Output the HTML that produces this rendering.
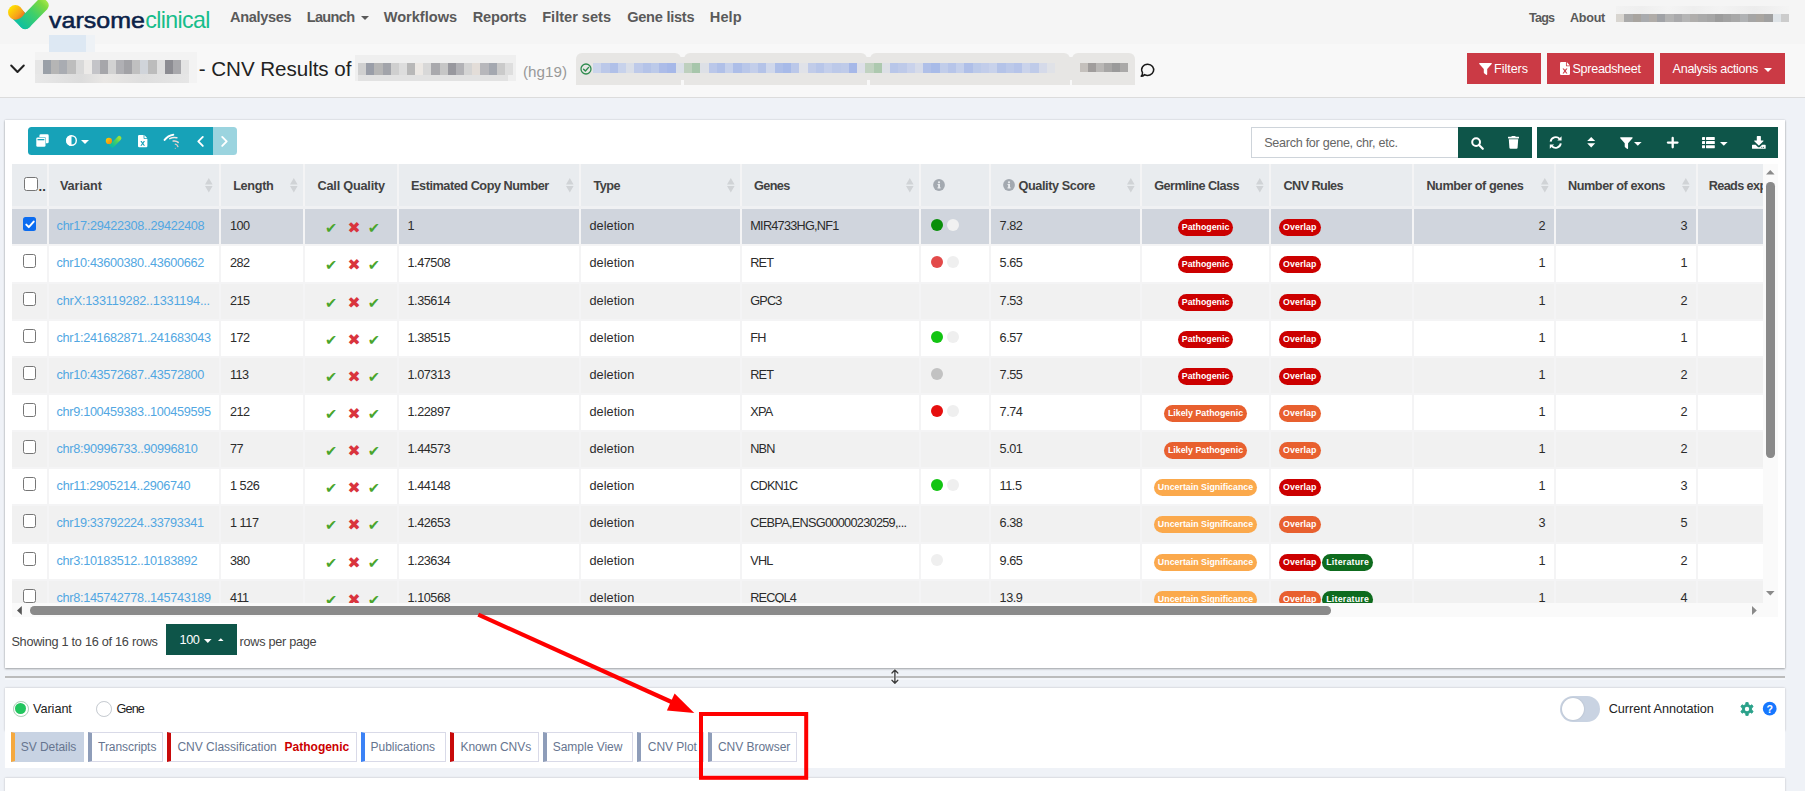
<!DOCTYPE html>
<html lang="en"><head><meta charset="utf-8"><title>VarSome Clinical - CNV Results</title>
<style>
html,body{margin:0;padding:0}
body{width:1805px;height:791px;overflow:hidden;position:relative;background:#eff2f7;font-family:"Liberation Sans",sans-serif;font-size:12.5px;color:#333}
.a{position:absolute}
.t{position:absolute;white-space:nowrap;line-height:20px;height:20px}
svg{position:absolute;overflow:visible}
.cell{position:absolute;overflow:hidden}
.badge{position:absolute;height:16.6px;border-radius:9px;color:#fff;font-weight:700;font-size:8.8px;line-height:17.4px;text-align:center;white-space:nowrap}
.cb{position:absolute;width:11.5px;height:11.5px;border:1.2px solid #767676;border-radius:2.5px;background:#fff}
.dot{position:absolute;width:12px;height:12px;border-radius:50%}
.ck{position:absolute;font-family:"DejaVu Sans",sans-serif;font-size:14.6px;line-height:16px;height:16px}
.tab{position:absolute;top:732.2px;height:27.4px;border:1px solid #d9dae8;border-left:4px solid #8e9db9;background:#fff;box-sizing:content-box}
.tab span{position:absolute;top:0;line-height:28.4px;font-size:12px;color:#66758f;white-space:nowrap}
</style></head><body>

<div class="a" style="left:0;top:0;width:1805px;height:44px;background:#f5f5f5"></div>
<div class="a" style="left:0;top:44px;width:1805px;height:53px;background:#f8f8f8"></div>
<div class="a" style="left:0;top:96.5px;width:1805px;height:1.5px;background:#dcdcdc"></div>
<svg style="left:0;top:0" width="60" height="34" viewBox="0 0 60 34">
<defs>
<linearGradient id="lg1" gradientUnits="userSpaceOnUse" x1="16" y1="30" x2="48" y2="0"><stop offset="0" stop-color="#12c2a0"/><stop offset="0.55" stop-color="#3fcf6a"/><stop offset="1" stop-color="#8fdc3a"/></linearGradient>
<linearGradient id="lg1b" x1="0.5" y1="1" x2="0.5" y2="0"><stop offset="0" stop-color="#0fc0a0"/><stop offset="0.5" stop-color="#3fcf6a"/><stop offset="0.85" stop-color="#7dd940"/><stop offset="1" stop-color="#a5e84a"/></linearGradient>
<linearGradient id="lg2" gradientUnits="userSpaceOnUse" x1="11" y1="7" x2="23" y2="19"><stop offset="0" stop-color="#ffe000"/><stop offset="0.6" stop-color="#f7a21b"/><stop offset="1" stop-color="#e8641f"/></linearGradient>
</defs>
<path d="M15.4 12.4 L25.3 22.3" stroke="#12c2a0" stroke-width="13" stroke-linecap="round" fill="none"/>
<rect x="-6.5" y="-30.2" width="13" height="36.7" rx="5.5" fill="url(#lg1b)" transform="translate(25.3 22.3) rotate(44.4)"/>
<path d="M25 13.1 L20.36 7.04 A7.3 7.3 0 0 0 10.04 17.36 L12.2 18.9 Q19.8 21.8 25 13.1Z" fill="url(#lg2)"/>
</svg>
<div class="t" style="left:48.8px;top:9.8px;font-size:22.7px;color:#0b2248;letter-spacing:0.03px;-webkit-text-stroke:0.55px #0b2248;transform:scaleX(1.1);transform-origin:0 50%;">varsome</div>
<div class="t" style="left:145.2px;top:9.8px;font-size:23.2px;color:#17bd8b;letter-spacing:-0.64px;">clinical</div>
<div class="a" style="left:49px;top:35px;width:37px;height:17px;background:#dde8f3"></div>
<div class="a" style="left:86px;top:35px;width:9px;height:17px;background:#eef2f6"></div>
<div class="t" style="left:230.1px;top:7.0px;font-size:14.6px;color:#5a5a5a;font-weight:700;letter-spacing:-0.38px;">Analyses</div>
<div class="t" style="left:306.7px;top:7.0px;font-size:14.6px;color:#5a5a5a;font-weight:700;letter-spacing:-0.68px;">Launch</div>
<div class="t" style="left:383.7px;top:7.0px;font-size:14.6px;color:#5a5a5a;font-weight:700;letter-spacing:-0.01px;">Workflows</div>
<div class="t" style="left:472.7px;top:7.0px;font-size:14.6px;color:#5a5a5a;font-weight:700;letter-spacing:-0.21px;">Reports</div>
<div class="t" style="left:542.2px;top:7.0px;font-size:14.6px;color:#5a5a5a;font-weight:700;letter-spacing:-0.01px;">Filter sets</div>
<div class="t" style="left:627.2px;top:7.0px;font-size:14.6px;color:#5a5a5a;font-weight:700;letter-spacing:-0.27px;">Gene lists</div>
<div class="t" style="left:709.8px;top:7.0px;font-size:14.6px;color:#5a5a5a;font-weight:700;letter-spacing:0.07px;">Help</div>
<svg style="left:361px;top:15.5px" width="8" height="4" viewBox="0 0 8 4"><path d="M0 0H8L4 4Z" fill="#5a5a5a"/></svg>
<div class="t" style="left:1529.0px;top:7.5px;font-size:12.6px;color:#5a5a5a;font-weight:700;letter-spacing:-0.79px;">Tags</div>
<div class="t" style="left:1570.0px;top:7.5px;font-size:12.6px;color:#5a5a5a;font-weight:700;letter-spacing:-0.28px;">About</div>
<div class="a" style="left:1616.0px;top:14px;width:8.5px;height:8px;background:#d8d5d0"></div><div class="a" style="left:1624.2px;top:14px;width:8.5px;height:8px;background:#aaaaaa"></div><div class="a" style="left:1632.5px;top:14px;width:8.5px;height:8px;background:#a8a49f"></div><div class="a" style="left:1640.7px;top:14px;width:8.5px;height:8px;background:#a9abae"></div><div class="a" style="left:1649.0px;top:14px;width:8.5px;height:8px;background:#b0aca8"></div><div class="a" style="left:1657.2px;top:14px;width:8.5px;height:8px;background:#a0a2a6"></div><div class="a" style="left:1665.4px;top:14px;width:8.5px;height:8px;background:#b3b3b3"></div><div class="a" style="left:1673.7px;top:14px;width:8.5px;height:8px;background:#a9a9ab"></div><div class="a" style="left:1681.9px;top:14px;width:8.5px;height:8px;background:#b5b5b5"></div><div class="a" style="left:1690.1px;top:14px;width:8.5px;height:8px;background:#b0aeac"></div><div class="a" style="left:1698.4px;top:14px;width:8.5px;height:8px;background:#aaaaaa"></div><div class="a" style="left:1706.6px;top:14px;width:8.5px;height:8px;background:#a6a6a6"></div><div class="a" style="left:1714.9px;top:14px;width:8.5px;height:8px;background:#9c9c9c"></div><div class="a" style="left:1723.1px;top:14px;width:8.5px;height:8px;background:#a2a2a2"></div><div class="a" style="left:1731.3px;top:14px;width:8.5px;height:8px;background:#a8a8a8"></div><div class="a" style="left:1739.6px;top:14px;width:8.5px;height:8px;background:#b0b2b4"></div><div class="a" style="left:1747.8px;top:14px;width:8.5px;height:8px;background:#a5a5a5"></div><div class="a" style="left:1756.0px;top:14px;width:8.5px;height:8px;background:#a9a5a0"></div><div class="a" style="left:1764.3px;top:14px;width:8.5px;height:8px;background:#a0a0a0"></div><div class="a" style="left:1772.5px;top:14px;width:8.5px;height:8px;background:#dfe4e8"></div><div class="a" style="left:1780.8px;top:14px;width:8.5px;height:8px;background:#cccccc"></div>
<div class="a" style="left:1616px;top:6px;width:173px;height:8px;background:linear-gradient(90deg,#f2f2f2 0,#eee 15%,#f4f4f4 30%,#eee 45%,#f3f3f3 60%,#ececec 80%,#f4f4f4 100%)"></div>
<svg style="left:9.5px;top:64px" width="15" height="10" viewBox="0 0 15 10"><path d="M1.2 1.5L7.5 8L13.8 1.5" stroke="#222" stroke-width="2" fill="none" stroke-linecap="round" stroke-linejoin="round"/></svg>
<div class="a" style="left:35px;top:52px;width:162px;height:31px;background:#f3f3f3"></div>
<div class="a" style="left:35.0px;top:60px;width:8.4px;height:14px;background:#e6e6e6"></div><div class="a" style="left:43.1px;top:60px;width:8.4px;height:14px;background:#9aa0a8"></div><div class="a" style="left:51.2px;top:60px;width:8.4px;height:14px;background:#b5b5b5"></div><div class="a" style="left:59.3px;top:60px;width:8.4px;height:14px;background:#a9acb2"></div><div class="a" style="left:67.4px;top:60px;width:8.4px;height:14px;background:#bdbdbd"></div><div class="a" style="left:75.5px;top:60px;width:8.4px;height:14px;background:#d9d9d9"></div><div class="a" style="left:83.6px;top:60px;width:8.4px;height:14px;background:#eceae8"></div><div class="a" style="left:91.7px;top:60px;width:8.4px;height:14px;background:#c4c4c8"></div><div class="a" style="left:99.8px;top:60px;width:8.4px;height:14px;background:#a6a6aa"></div><div class="a" style="left:107.9px;top:60px;width:8.4px;height:14px;background:#d2d2d2"></div><div class="a" style="left:116.0px;top:60px;width:8.4px;height:14px;background:#b0b0b4"></div><div class="a" style="left:124.1px;top:60px;width:8.4px;height:14px;background:#a2a2a6"></div><div class="a" style="left:132.2px;top:60px;width:8.4px;height:14px;background:#c0c0c0"></div><div class="a" style="left:140.3px;top:60px;width:8.4px;height:14px;background:#d0d4da"></div><div class="a" style="left:148.4px;top:60px;width:8.4px;height:14px;background:#bcbcbc"></div><div class="a" style="left:156.5px;top:60px;width:8.4px;height:14px;background:#dedede"></div><div class="a" style="left:164.6px;top:60px;width:8.4px;height:14px;background:#8c8c92"></div><div class="a" style="left:172.7px;top:60px;width:8.4px;height:14px;background:#a8a8ac"></div><div class="a" style="left:180.8px;top:60px;width:8.4px;height:14px;background:#e4e4e4"></div><div class="a" style="left:188.9px;top:60px;width:8.4px;height:14px;background:#f3f3f3"></div>
<div class="a" style="left:35px;top:74px;width:154px;height:9px;background:linear-gradient(90deg,#e8e8e8,#dcdcdc 30%,#e9e7e5 45%,#dedede 70%,#e6e6e6)"></div>
<div class="t" style="left:198.8px;top:58.7px;font-size:20.6px;color:#222;letter-spacing:-0.05px;">- CNV Results of</div>
<div class="a" style="left:355px;top:55px;width:161px;height:26px;background:#efefef"></div>
<div class="a" style="left:358.0px;top:63px;width:8.5px;height:12px;background:#d0d0d0"></div><div class="a" style="left:366.2px;top:63px;width:8.5px;height:12px;background:#9a9ea8"></div><div class="a" style="left:374.3px;top:63px;width:8.5px;height:12px;background:#b6b6b6"></div><div class="a" style="left:382.5px;top:63px;width:8.5px;height:12px;background:#a2a4aa"></div><div class="a" style="left:390.6px;top:63px;width:8.5px;height:12px;background:#cfcfcf"></div><div class="a" style="left:398.8px;top:63px;width:8.5px;height:12px;background:#ddd"></div><div class="a" style="left:406.9px;top:63px;width:8.5px;height:12px;background:#b8b8b8"></div><div class="a" style="left:415.1px;top:63px;width:8.5px;height:12px;background:#ece8e4"></div><div class="a" style="left:423.3px;top:63px;width:8.5px;height:12px;background:#d8d8d8"></div><div class="a" style="left:431.4px;top:63px;width:8.5px;height:12px;background:#a9a9ad"></div><div class="a" style="left:439.6px;top:63px;width:8.5px;height:12px;background:#c6c6c6"></div><div class="a" style="left:447.7px;top:63px;width:8.5px;height:12px;background:#98989e"></div><div class="a" style="left:455.9px;top:63px;width:8.5px;height:12px;background:#b2b2b6"></div><div class="a" style="left:464.1px;top:63px;width:8.5px;height:12px;background:#d4d4d4"></div><div class="a" style="left:472.2px;top:63px;width:8.5px;height:12px;background:#e3ddd8"></div><div class="a" style="left:480.4px;top:63px;width:8.5px;height:12px;background:#b7b7bb"></div><div class="a" style="left:488.5px;top:63px;width:8.5px;height:12px;background:#a4a8b0"></div><div class="a" style="left:496.7px;top:63px;width:8.5px;height:12px;background:#cacaca"></div><div class="a" style="left:504.8px;top:63px;width:8.5px;height:12px;background:#dedede"></div>
<div class="a" style="left:358px;top:75px;width:150px;height:6px;background:#e2e2e2"></div>
<div class="t" style="left:523.0px;top:61.5px;font-size:15.2px;color:#999;letter-spacing:0.01px;">(hg19)</div>
<div class="a" style="left:576px;top:53.1px;width:105.0px;height:31.8px;background:#e7e6e4;border-radius:6px 6px 0 0"></div>
<div class="a" style="left:683.7px;top:53.1px;width:183.8px;height:31.8px;background:#e7e6e4;border-radius:6px 6px 0 0"></div>
<div class="a" style="left:870px;top:53.1px;width:199.6px;height:31.8px;background:#e7e6e4;border-radius:6px 6px 0 0"></div>
<div class="a" style="left:1072px;top:53.1px;width:63.0px;height:31.8px;background:#e7e6e4;border-radius:6px 6px 0 0"></div>
<div class="a" style="left:593px;top:57px;width:535px;height:23px;background:#e7e6e4"></div>
<svg style="left:580px;top:63px" width="12" height="12" viewBox="0 0 12 12"><circle cx="6" cy="6" r="5" fill="none" stroke="#2e8b4e" stroke-width="1.3"/><path d="M3.6 6.2L5.4 8L8.6 4.4" fill="none" stroke="#2e8b4e" stroke-width="1.4" stroke-linecap="round" stroke-linejoin="round"/></svg>
<div class="a" style="left:593.0px;top:62.5px;width:8.6px;height:10px;background:#ccd5eb"></div><div class="a" style="left:601.2px;top:62.5px;width:8.6px;height:10px;background:#bbc8e9"></div><div class="a" style="left:609.5px;top:62.5px;width:8.6px;height:10px;background:#b0c0e8"></div><div class="a" style="left:617.8px;top:62.5px;width:8.6px;height:10px;background:#c7d2eb"></div><div class="a" style="left:626.0px;top:62.5px;width:8.6px;height:10px;background:#d9dee8"></div><div class="a" style="left:634.2px;top:62.5px;width:8.6px;height:10px;background:#becae9"></div><div class="a" style="left:642.5px;top:62.5px;width:8.6px;height:10px;background:#b4c3e8"></div><div class="a" style="left:650.8px;top:62.5px;width:8.6px;height:10px;background:#bccae9"></div><div class="a" style="left:659.0px;top:62.5px;width:8.6px;height:10px;background:#acbce8"></div><div class="a" style="left:667.2px;top:62.5px;width:8.6px;height:10px;background:#a6b8e8"></div><div class="a" style="left:675.5px;top:62.5px;width:8.6px;height:10px;background:#dbe0e8"></div><div class="a" style="left:683.8px;top:62.5px;width:8.6px;height:10px;background:#bed0be"></div><div class="a" style="left:692.0px;top:62.5px;width:8.6px;height:10px;background:#a7c6ab"></div><div class="a" style="left:700.2px;top:62.5px;width:8.6px;height:10px;background:#dde0e6"></div><div class="a" style="left:708.5px;top:62.5px;width:8.6px;height:10px;background:#bac7e9"></div><div class="a" style="left:716.8px;top:62.5px;width:8.6px;height:10px;background:#b0c0e8"></div><div class="a" style="left:725.0px;top:62.5px;width:8.6px;height:10px;background:#c6d1eb"></div><div class="a" style="left:733.2px;top:62.5px;width:8.6px;height:10px;background:#adbee8"></div><div class="a" style="left:741.5px;top:62.5px;width:8.6px;height:10px;background:#b9c7e9"></div><div class="a" style="left:749.8px;top:62.5px;width:8.6px;height:10px;background:#c3ceea"></div><div class="a" style="left:758.0px;top:62.5px;width:8.6px;height:10px;background:#b4c3e8"></div><div class="a" style="left:766.2px;top:62.5px;width:8.6px;height:10px;background:#d0d8eb"></div><div class="a" style="left:774.5px;top:62.5px;width:8.6px;height:10px;background:#aebfe8"></div><div class="a" style="left:782.8px;top:62.5px;width:8.6px;height:10px;background:#a7bae8"></div><div class="a" style="left:791.0px;top:62.5px;width:8.6px;height:10px;background:#bbc8e9"></div><div class="a" style="left:799.2px;top:62.5px;width:8.6px;height:10px;background:#e0e2e8"></div><div class="a" style="left:807.5px;top:62.5px;width:8.6px;height:10px;background:#c1cce9"></div><div class="a" style="left:815.8px;top:62.5px;width:8.6px;height:10px;background:#b8c6e9"></div><div class="a" style="left:824.0px;top:62.5px;width:8.6px;height:10px;background:#c4cfeb"></div><div class="a" style="left:832.2px;top:62.5px;width:8.6px;height:10px;background:#bcc9e9"></div><div class="a" style="left:840.5px;top:62.5px;width:8.6px;height:10px;background:#bfcbe9"></div><div class="a" style="left:848.8px;top:62.5px;width:8.6px;height:10px;background:#a6b8e8"></div><div class="a" style="left:857.0px;top:62.5px;width:8.6px;height:10px;background:#dee0e8"></div><div class="a" style="left:865.2px;top:62.5px;width:8.6px;height:10px;background:#c1d2c1"></div><div class="a" style="left:873.5px;top:62.5px;width:8.6px;height:10px;background:#adc9af"></div><div class="a" style="left:881.8px;top:62.5px;width:8.6px;height:10px;background:#dde0e6"></div><div class="a" style="left:890.0px;top:62.5px;width:8.6px;height:10px;background:#b8c6e9"></div><div class="a" style="left:898.2px;top:62.5px;width:8.6px;height:10px;background:#becae9"></div><div class="a" style="left:906.5px;top:62.5px;width:8.6px;height:10px;background:#c9d2eb"></div><div class="a" style="left:914.8px;top:62.5px;width:8.6px;height:10px;background:#d6dbe9"></div><div class="a" style="left:923.0px;top:62.5px;width:8.6px;height:10px;background:#b0c0e8"></div><div class="a" style="left:931.2px;top:62.5px;width:8.6px;height:10px;background:#a8bbe8"></div><div class="a" style="left:939.5px;top:62.5px;width:8.6px;height:10px;background:#c1cdea"></div><div class="a" style="left:947.8px;top:62.5px;width:8.6px;height:10px;background:#b7c5e9"></div><div class="a" style="left:956.0px;top:62.5px;width:8.6px;height:10px;background:#c5d0eb"></div><div class="a" style="left:964.2px;top:62.5px;width:8.6px;height:10px;background:#afbfe8"></div><div class="a" style="left:972.5px;top:62.5px;width:8.6px;height:10px;background:#bccae9"></div><div class="a" style="left:980.8px;top:62.5px;width:8.6px;height:10px;background:#c2cdea"></div><div class="a" style="left:989.0px;top:62.5px;width:8.6px;height:10px;background:#c8d2eb"></div><div class="a" style="left:997.2px;top:62.5px;width:8.6px;height:10px;background:#b4c3e8"></div><div class="a" style="left:1005.5px;top:62.5px;width:8.6px;height:10px;background:#bcc9e9"></div><div class="a" style="left:1013.8px;top:62.5px;width:8.6px;height:10px;background:#b6c4e9"></div><div class="a" style="left:1022.0px;top:62.5px;width:8.6px;height:10px;background:#cad3eb"></div><div class="a" style="left:1030.2px;top:62.5px;width:8.6px;height:10px;background:#bfcbe9"></div><div class="a" style="left:1038.5px;top:62.5px;width:8.6px;height:10px;background:#d5dae9"></div><div class="a" style="left:1046.8px;top:62.5px;width:8.6px;height:10px;background:#e0e2e7"></div>
<div class="a" style="left:1080.0px;top:62.5px;width:8.3px;height:9px;background:#c4c0bc"></div><div class="a" style="left:1088.0px;top:62.5px;width:8.3px;height:9px;background:#a09d9c"></div><div class="a" style="left:1096.0px;top:62.5px;width:8.3px;height:9px;background:#b9b7b5"></div><div class="a" style="left:1104.0px;top:62.5px;width:8.3px;height:9px;background:#a7a6a5"></div><div class="a" style="left:1112.0px;top:62.5px;width:8.3px;height:9px;background:#9a9a9a"></div><div class="a" style="left:1120.0px;top:62.5px;width:8.3px;height:9px;background:#aaa9a8"></div>
<svg style="left:1140px;top:62.5px" width="15" height="15" viewBox="0 0 15 15"><path d="M7.8 1.2A6 5.6 0 1 1 4.6 11.6Q3 13.2 1.2 13.3Q2.6 11.6 2.5 9.6A6 5.6 0 0 1 7.8 1.2Z" fill="none" stroke="#1a1a1a" stroke-width="1.5" stroke-linejoin="round"/></svg>
<div class="a" style="left:1467px;top:53px;width:74px;height:30.7px;background:#cb3a45"></div>
<div class="a" style="left:1547px;top:53px;width:107px;height:30.7px;background:#cb3a45"></div>
<div class="a" style="left:1660px;top:53px;width:125px;height:30.7px;background:#cb3a45"></div>
<svg style="left:1479.4px;top:62.5px" width="13" height="12" viewBox="0 0 13 12"><path d="M0.6 0H12.4Q13.3 0.3 12.7 1.1L8.2 6V11.3Q8 12.3 7.1 11.7L5.1 10.2Q4.8 9.9 4.8 9.5V6L0.3 1.1Q-0.3 0.3 0.6 0Z" fill="#fff"/></svg>
<div class="t" style="left:1494.0px;top:58.5px;font-size:12.6px;color:#fff;letter-spacing:-0.04px;">Filters</div>
<svg style="left:1560px;top:62.3px" width="10" height="13" viewBox="0 0 9.4 12.2"><path d="M0 1.2Q0 0 1.2 0H5.6V3.2Q5.6 4 6.4 4H9.4V11Q9.4 12.2 8.2 12.2H1.2Q0 12.2 0 11ZM6.4 0.1L9.3 3.2H6.4ZM2.4 6L3.7 6L4.7 7.6L5.7 6H7L5.4 8.4L7 10.8H5.7L4.7 9.2L3.7 10.8H2.4L4 8.4Z" fill="#fff" fill-rule="evenodd"/></svg>
<div class="t" style="left:1572.5px;top:58.5px;font-size:12.6px;color:#fff;letter-spacing:-0.30px;">Spreadsheet</div>
<div class="t" style="left:1672.6px;top:58.5px;font-size:12.6px;color:#fff;letter-spacing:-0.31px;">Analysis actions</div>
<svg style="left:1764px;top:68px" width="8" height="4" viewBox="0 0 8 4"><path d="M0 0H8L4 4Z" fill="#fff"/></svg>
<div class="a" style="left:5px;top:119.5px;width:1780px;height:548.5px;background:#fff;box-shadow:0 1px 2px rgba(0,0,0,.30),0 0 2px rgba(0,0,0,.14)"></div>
<div class="a" style="left:28px;top:127px;width:185px;height:27.6px;background:#17a2b8;border-radius:3.5px 0 0 3.5px"></div>
<div class="a" style="left:213px;top:127px;width:24px;height:27.6px;background:#9bd4df;border-radius:0 3.5px 3.5px 0"></div>
<svg style="left:36px;top:134px" width="13" height="13" viewBox="0 0 13 13">
<rect x="3.4" y="0.3" width="9.3" height="9" rx="1.4" fill="#fff"/>
<rect x="-0.3" y="2.9" width="10.2" height="10.2" rx="1.6" fill="#17a2b8"/>
<rect x="0.3" y="3.5" width="9.2" height="9.2" rx="1.3" fill="#fff"/>
<rect x="1.5" y="5" width="6.8" height="1.3" fill="#17a2b8"/>
</svg>
<svg style="left:65.5px;top:135.4px" width="11" height="11" viewBox="0 0 11 11"><circle cx="5.5" cy="5.5" r="4.8" fill="none" stroke="#fff" stroke-width="1.4"/><path d="M5.5 0.2A5.3 5.3 0 0 0 5.5 10.8Z" fill="#fff"/></svg>
<svg style="left:81.3px;top:140.4px" width="8" height="4" viewBox="0 0 8 4"><path d="M0 0H8L4 4Z" fill="#fff"/></svg>
<svg style="left:105px;top:135px" width="17" height="13" viewBox="0 0 17 13">
<defs><linearGradient id="lg3" x1="0" y1="1" x2="1" y2="0"><stop offset="0" stop-color="#10bf9a"/><stop offset="0.6" stop-color="#4fd25a"/><stop offset="1" stop-color="#9be03a"/></linearGradient>
<linearGradient id="lg4" x1="0" y1="0" x2="1" y2="1"><stop offset="0" stop-color="#ffd400"/><stop offset="1" stop-color="#f07d1c"/></linearGradient></defs>
<path d="M4.6 7.2L7.5 10.1" stroke="#12c19c" stroke-width="4.4" stroke-linecap="round"/>
<path d="M7.5 10.1L14.2 3.2" stroke="url(#lg3)" stroke-width="4.4" stroke-linecap="round"/>
<circle cx="3.9" cy="5.9" r="3.1" fill="url(#lg4)"/>
</svg>
<svg style="left:138px;top:134.7px" width="9.4" height="12.2" viewBox="0 0 9.4 12.2"><path d="M0 1.2Q0 0 1.2 0H5.6V3.2Q5.6 4 6.4 4H9.4V11Q9.4 12.2 8.2 12.2H1.2Q0 12.2 0 11ZM6.4 0.1L9.3 3.2H6.4ZM2.4 6L3.7 6L4.7 7.6L5.7 6H7L5.4 8.4L7 10.8H5.7L4.7 9.2L3.7 10.8H2.4L4 8.4Z" fill="#fff" fill-rule="evenodd"/></svg>
<svg style="left:164px;top:134px" width="16" height="15" viewBox="0 0 16 15" fill="none" stroke-linecap="round">
<path d="M0.6 5.9Q4 1.4 9.3 0.7" stroke="#fff" stroke-width="2"/>
<path d="M5.8 4.6Q9.4 2.8 12.8 3.8" stroke="#f5e9e7" stroke-width="1.6"/>
<path d="M9.2 7.1Q12 6.4 14.2 8.4" stroke="#eedad7" stroke-width="1.5"/>
<path d="M11.3 10.1Q13.3 10.4 13.9 12.6" stroke="#e4c9c5" stroke-width="1.4"/>
<circle cx="11.3" cy="14.3" r="0.6" fill="#d9b3ae" stroke="none"/>
</svg>
<svg style="left:196.5px;top:135.6px" width="7" height="11" viewBox="0 0 7 11"><path d="M5.8 0.9L1.3 5.4L5.8 9.9" stroke="#fff" stroke-width="1.9" fill="none" stroke-linecap="round" stroke-linejoin="round"/></svg>
<svg style="left:221px;top:135.6px" width="7" height="11" viewBox="0 0 7 11"><path d="M1.2 0.9L5.7 5.4L1.2 9.9" stroke="#fff" stroke-width="1.9" fill="none" stroke-linecap="round" stroke-linejoin="round"/></svg>
<div class="a" style="left:1251px;top:127.2px;width:206px;height:28.6px;background:#fff;border:1px solid #ced4da"></div>
<div class="t" style="left:1264.2px;top:132.6px;font-size:12.6px;color:#666;letter-spacing:-0.28px;">Search for gene, chr, etc.</div>
<div class="a" style="left:1457.6px;top:127.1px;width:74.2px;height:30.5px;background:#0e5549"></div>
<div class="a" style="left:1537.1px;top:127.1px;width:240.8px;height:30.5px;background:#0e5549"></div>
<svg style="left:1471px;top:136.5px" width="13" height="13" viewBox="0 0 13 13"><circle cx="5.1" cy="5.1" r="3.9" fill="none" stroke="#fff" stroke-width="2"/><path d="M8 8L11.8 11.8" stroke="#fff" stroke-width="2.2" stroke-linecap="round"/></svg>
<svg style="left:1508px;top:136.4px" width="11" height="13" viewBox="0 0 11 13"><path d="M0 1.1Q0 0.8 0.4 0.8H3.2L3.6 0.2Q3.8 0 4.1 0H6.9Q7.2 0 7.4 0.2L7.8 0.8H10.6Q11 0.8 11 1.1V2.1Q11 2.4 10.6 2.4H0.4Q0 2.4 0 2.1ZM0.8 3.2H10.2L9.6 11.8Q9.5 12.7 8.5 12.7H2.5Q1.5 12.7 1.4 11.8Z" fill="#fff"/></svg>
<svg style="left:1549px;top:136.2px" width="13.4" height="13" viewBox="0 0 13.4 13" fill="none" stroke="#fff" stroke-width="1.9">
<path d="M1.6 5.6A5.2 5.2 0 0 1 10.6 2.9"/><path d="M11.8 7.4A5.2 5.2 0 0 1 2.8 10.1"/>
<path d="M12.6 0.3V4.6H8.3Z" fill="#fff" stroke="none"/><path d="M0.8 12.7V8.4H5.1Z" fill="#fff" stroke="none"/></svg>
<svg style="left:1586.6px;top:137.4px" width="8.4" height="10.4" viewBox="0 0 8.4 10.4"><path d="M4.2 0L8.2 4.1H0.2Z M4.2 10.4L8.2 6.3H0.2Z" fill="#fff"/></svg>
<svg style="left:1620px;top:136.6px" width="12.8" height="12.3" viewBox="0 0 13 12"><path d="M0.6 0H12.4Q13.3 0.3 12.7 1.1L8.2 6V11.3Q8 12.3 7.1 11.7L5.1 10.2Q4.8 9.9 4.8 9.5V6L0.3 1.1Q-0.3 0.3 0.6 0Z" fill="#fff"/></svg>
<svg style="left:1634.2px;top:142.2px" width="7.6" height="3.9" viewBox="0 0 8 4"><path d="M0 0H8L4 4Z" fill="#fff"/></svg>
<svg style="left:1667px;top:137.2px" width="11.4" height="11.2" viewBox="0 0 11.4 11.2"><path d="M5.7 0.9V10.3M0.9 5.6H10.5" stroke="#fff" stroke-width="2.3" stroke-linecap="round"/></svg>
<svg style="left:1702.2px;top:137px" width="12.8" height="11.2" viewBox="0 0 12.8 11.2" fill="#fff"><rect x="0" y="0" width="3" height="3" rx=".4"/><rect x="4" y="0" width="8.8" height="3" rx=".4"/><rect x="0" y="4.1" width="3" height="3" rx=".4"/><rect x="4" y="4.1" width="8.8" height="3" rx=".4"/><rect x="0" y="8.2" width="3" height="3" rx=".4"/><rect x="4" y="8.2" width="8.8" height="3" rx=".4"/></svg>
<svg style="left:1720.4px;top:142.2px" width="7.6" height="3.9" viewBox="0 0 8 4"><path d="M0 0H8L4 4Z" fill="#fff"/></svg>
<svg style="left:1751.5px;top:136.2px" width="13.7" height="12.8" viewBox="0 0 13.7 12.8" fill="#fff"><path d="M5.3 0H8.4Q8.9 0 8.9 0.5V4.4H11.1Q11.9 4.5 11.4 5.2L7.3 9.2Q6.85 9.6 6.4 9.2L2.3 5.2Q1.8 4.5 2.6 4.4H4.8V0.5Q4.8 0 5.3 0Z"/><path d="M0.6 8.8H3.6L5.6 10.7Q6.85 11.7 8.1 10.7L10.1 8.8H13.1Q13.7 8.8 13.7 9.4V12.2Q13.7 12.8 13.1 12.8H0.6Q0 12.8 0 12.2V9.4Q0 8.8 0.6 8.8Z"/><circle cx="11.5" cy="11.3" r=".55" fill="#0e5549"/><circle cx="9.8" cy="11.3" r=".55" fill="#0e5549"/></svg>
<div class="a" style="left:0;top:0;width:1763.3px;height:602.7px;overflow:hidden">
<div class="a" style="left:12.2px;top:164.4px;width:1760px;height:438.3px;background:#f4f4f5"></div>
<div class="a" style="left:12.2px;top:206px;width:1760px;height:3px;background:#f0f1f3"></div>
<div class="a" style="left:12.2px;top:164.4px;width:34.5px;height:41.6px;background:#e9ecef"></div>
<div class="a" style="left:48.8px;top:164.4px;width:169.8px;height:41.6px;background:#e9ecef"></div>
<div class="a" style="left:220.7px;top:164.4px;width:82.0px;height:41.6px;background:#e9ecef"></div>
<div class="a" style="left:304.8px;top:164.4px;width:92.0px;height:41.6px;background:#e9ecef"></div>
<div class="a" style="left:398.9px;top:164.4px;width:180.3px;height:41.6px;background:#e9ecef"></div>
<div class="a" style="left:581.3px;top:164.4px;width:158.5px;height:41.6px;background:#e9ecef"></div>
<div class="a" style="left:741.9px;top:164.4px;width:177.2px;height:41.6px;background:#e9ecef"></div>
<div class="a" style="left:921.2px;top:164.4px;width:67.7px;height:41.6px;background:#e9ecef"></div>
<div class="a" style="left:991px;top:164.4px;width:149.1px;height:41.6px;background:#e9ecef"></div>
<div class="a" style="left:1142.2px;top:164.4px;width:126.7px;height:41.6px;background:#e9ecef"></div>
<div class="a" style="left:1271px;top:164.4px;width:140.9px;height:41.6px;background:#e9ecef"></div>
<div class="a" style="left:1414px;top:164.4px;width:139.8px;height:41.6px;background:#e9ecef"></div>
<div class="a" style="left:1555.9px;top:164.4px;width:139.8px;height:41.6px;background:#e9ecef"></div>
<div class="a" style="left:1697.8px;top:164.4px;width:65.7px;height:41.6px;background:#e9ecef"></div>
<div class="t" style="left:59.9px;top:175.6px;font-size:12.7px;color:#424242;font-weight:700;letter-spacing:-0.05px;">Variant</div>
<div class="t" style="left:233.2px;top:175.6px;font-size:12.7px;color:#424242;font-weight:700;letter-spacing:-0.34px;">Length</div>
<div class="t" style="left:317.5px;top:175.6px;font-size:12.7px;color:#424242;font-weight:700;letter-spacing:-0.20px;">Call Quality</div>
<div class="t" style="left:411.1px;top:175.6px;font-size:12.7px;color:#424242;font-weight:700;letter-spacing:-0.46px;">Estimated Copy Number</div>
<div class="t" style="left:593.6px;top:175.6px;font-size:12.7px;color:#424242;font-weight:700;letter-spacing:-0.55px;">Type</div>
<div class="t" style="left:754.1px;top:175.6px;font-size:12.7px;color:#424242;font-weight:700;letter-spacing:-0.66px;">Genes</div>
<div class="t" style="left:1018.6px;top:175.6px;font-size:12.7px;color:#424242;font-weight:700;letter-spacing:-0.42px;">Quality Score</div>
<div class="t" style="left:1154.2px;top:175.6px;font-size:12.7px;color:#424242;font-weight:700;letter-spacing:-0.53px;">Germline Class</div>
<div class="t" style="left:1283.5px;top:175.6px;font-size:12.7px;color:#424242;font-weight:700;letter-spacing:-0.60px;">CNV Rules</div>
<div class="t" style="left:1426.4px;top:175.6px;font-size:12.7px;color:#424242;font-weight:700;letter-spacing:-0.44px;">Number of genes</div>
<div class="t" style="left:1568.0px;top:175.6px;font-size:12.7px;color:#424242;font-weight:700;letter-spacing:-0.45px;">Number of exons</div>
<div class="t" style="left:1708.7px;top:175.6px;font-size:12.7px;color:#424242;font-weight:700;letter-spacing:-0.62px;">Reads expected</div>
<svg style="left:204.8px;top:178.4px" width="7.6" height="14.4" viewBox="0 0 6.6 14.2" preserveAspectRatio="none"><path d="M3.3 0L6.6 6.3H0Z M3.3 14.2L6.6 7.9H0Z" fill="#d0d3d6"/></svg>
<svg style="left:289.5px;top:178.4px" width="7.6" height="14.4" viewBox="0 0 6.6 14.2" preserveAspectRatio="none"><path d="M3.3 0L6.6 6.3H0Z M3.3 14.2L6.6 7.9H0Z" fill="#d0d3d6"/></svg>
<svg style="left:566.2px;top:178.4px" width="7.6" height="14.4" viewBox="0 0 6.6 14.2" preserveAspectRatio="none"><path d="M3.3 0L6.6 6.3H0Z M3.3 14.2L6.6 7.9H0Z" fill="#d0d3d6"/></svg>
<svg style="left:726.7px;top:178.4px" width="7.6" height="14.4" viewBox="0 0 6.6 14.2" preserveAspectRatio="none"><path d="M3.3 0L6.6 6.3H0Z M3.3 14.2L6.6 7.9H0Z" fill="#d0d3d6"/></svg>
<svg style="left:906.3px;top:178.4px" width="7.6" height="14.4" viewBox="0 0 6.6 14.2" preserveAspectRatio="none"><path d="M3.3 0L6.6 6.3H0Z M3.3 14.2L6.6 7.9H0Z" fill="#d0d3d6"/></svg>
<svg style="left:1126.8px;top:178.4px" width="7.6" height="14.4" viewBox="0 0 6.6 14.2" preserveAspectRatio="none"><path d="M3.3 0L6.6 6.3H0Z M3.3 14.2L6.6 7.9H0Z" fill="#d0d3d6"/></svg>
<svg style="left:1255.8px;top:178.4px" width="7.6" height="14.4" viewBox="0 0 6.6 14.2" preserveAspectRatio="none"><path d="M3.3 0L6.6 6.3H0Z M3.3 14.2L6.6 7.9H0Z" fill="#d0d3d6"/></svg>
<svg style="left:1540.5px;top:178.4px" width="7.6" height="14.4" viewBox="0 0 6.6 14.2" preserveAspectRatio="none"><path d="M3.3 0L6.6 6.3H0Z M3.3 14.2L6.6 7.9H0Z" fill="#d0d3d6"/></svg>
<svg style="left:1682.3px;top:178.4px" width="7.6" height="14.4" viewBox="0 0 6.6 14.2" preserveAspectRatio="none"><path d="M3.3 0L6.6 6.3H0Z M3.3 14.2L6.6 7.9H0Z" fill="#d0d3d6"/></svg>
<svg style="left:933.3px;top:179.2px" width="12" height="12" viewBox="0 0 12 12"><circle cx="6" cy="6" r="5.9" fill="#a3a9b0"/><rect x="5.1" y="5" width="1.9" height="4.2" fill="#e9ecef"/><rect x="4.5" y="5" width="1.6" height="1" fill="#e9ecef"/><rect x="4.4" y="8.4" width="3.3" height="1" fill="#e9ecef"/><circle cx="6" cy="3.3" r="1.1" fill="#e9ecef"/></svg>
<svg style="left:1002.9px;top:179.2px" width="12" height="12" viewBox="0 0 12 12"><circle cx="6" cy="6" r="5.9" fill="#a3a9b0"/><rect x="5.1" y="5" width="1.9" height="4.2" fill="#e9ecef"/><rect x="4.5" y="5" width="1.6" height="1" fill="#e9ecef"/><rect x="4.4" y="8.4" width="3.3" height="1" fill="#e9ecef"/><circle cx="6" cy="3.3" r="1.1" fill="#e9ecef"/></svg>
<div class="cb" style="left:24.2px;top:177.2px"></div>
<div class="t" style="left:38.6px;top:176.5px;font-size:13px;color:#333;font-weight:700;">..</div>
<div class="a" style="left:12.2px;top:209.0px;width:34.5px;height:35px;background:#d0d5dd"></div>
<div class="a" style="left:48.8px;top:209.0px;width:169.8px;height:35px;background:#d0d5dd"></div>
<div class="a" style="left:220.7px;top:209.0px;width:82.0px;height:35px;background:#d0d5dd"></div>
<div class="a" style="left:304.8px;top:209.0px;width:92.0px;height:35px;background:#d0d5dd"></div>
<div class="a" style="left:398.9px;top:209.0px;width:180.3px;height:35px;background:#d0d5dd"></div>
<div class="a" style="left:581.3px;top:209.0px;width:158.5px;height:35px;background:#d0d5dd"></div>
<div class="a" style="left:741.9px;top:209.0px;width:177.2px;height:35px;background:#d0d5dd"></div>
<div class="a" style="left:921.2px;top:209.0px;width:67.7px;height:35px;background:#d0d5dd"></div>
<div class="a" style="left:991px;top:209.0px;width:149.1px;height:35px;background:#d0d5dd"></div>
<div class="a" style="left:1142.2px;top:209.0px;width:126.7px;height:35px;background:#d0d5dd"></div>
<div class="a" style="left:1271px;top:209.0px;width:140.9px;height:35px;background:#d0d5dd"></div>
<div class="a" style="left:1414px;top:209.0px;width:139.8px;height:35px;background:#d0d5dd"></div>
<div class="a" style="left:1555.9px;top:209.0px;width:139.8px;height:35px;background:#d0d5dd"></div>
<div class="a" style="left:1697.8px;top:209.0px;width:65.7px;height:35px;background:#d0d5dd"></div>
<div class="a" style="left:22.8px;top:217.2px;width:13.4px;height:13.4px;border-radius:2.5px;background:#0b6cf0"></div>
<svg style="left:24.6px;top:219.6px" width="10" height="9" viewBox="0 0 10 9"><path d="M1.3 4.6L3.8 7.1L8.7 1.6" stroke="#fff" stroke-width="2" fill="none" stroke-linecap="round" stroke-linejoin="round"/></svg>
<div class="t" style="left:56.6px;top:216.0px;font-size:12.7px;color:#52a7e2;letter-spacing:-0.31px;">chr17:29422308..29422408</div>
<div class="t" style="left:229.9px;top:216.0px;font-size:12.7px;color:#2b2b2b;letter-spacing:-0.49px;">100</div>
<div class="ck" style="left:325px;top:220.2px;color:#49a52c">&#10004;</div>
<div class="ck" style="left:347.4px;top:220.4px;color:#d9343d;font-size:15.6px">&#10006;</div>
<div class="ck" style="left:367.8px;top:220.2px;color:#49a52c">&#10004;</div>
<div class="t" style="left:407.5px;top:216.0px;font-size:12.7px;color:#2b2b2b;letter-spacing:-0.49px;">1</div>
<div class="t" style="left:589.5px;top:216.0px;font-size:12.7px;color:#2b2b2b;letter-spacing:0.04px;">deletion</div>
<div class="t" style="left:750.3px;top:216.0px;font-size:12.7px;color:#2b2b2b;letter-spacing:-0.75px;">MIR4733HG,NF1</div>
<div class="dot" style="left:931.2px;top:219.1px;background:#0a8f0a"></div>
<div class="dot" style="left:947px;top:219.1px;background:#f1f1f1"></div>
<div class="t" style="left:999.5px;top:216.0px;font-size:12.7px;color:#2b2b2b;letter-spacing:-0.43px;">7.82</div>
<div class="badge" style="left:1177.9px;top:219.0px;width:55.4px;background:#cc0000;letter-spacing:0.02px">Pathogenic</div>
<div class="badge" style="left:1278.7px;top:219.0px;width:42.3px;background:#cc0000;letter-spacing:0.10px">Overlap</div>
<div class="t" style="left:1538.6px;top:216.0px;font-size:12.7px;color:#2b2b2b;">2</div>
<div class="t" style="left:1680.5px;top:216.0px;font-size:12.7px;color:#2b2b2b;">3</div>
<div class="a" style="left:12.2px;top:246.0px;width:34.5px;height:36px;background:#fff"></div>
<div class="a" style="left:48.8px;top:246.0px;width:169.8px;height:36px;background:#fff"></div>
<div class="a" style="left:220.7px;top:246.0px;width:82.0px;height:36px;background:#fff"></div>
<div class="a" style="left:304.8px;top:246.0px;width:92.0px;height:36px;background:#fff"></div>
<div class="a" style="left:398.9px;top:246.0px;width:180.3px;height:36px;background:#fff"></div>
<div class="a" style="left:581.3px;top:246.0px;width:158.5px;height:36px;background:#fff"></div>
<div class="a" style="left:741.9px;top:246.0px;width:177.2px;height:36px;background:#fff"></div>
<div class="a" style="left:921.2px;top:246.0px;width:67.7px;height:36px;background:#fff"></div>
<div class="a" style="left:991px;top:246.0px;width:149.1px;height:36px;background:#fff"></div>
<div class="a" style="left:1142.2px;top:246.0px;width:126.7px;height:36px;background:#fff"></div>
<div class="a" style="left:1271px;top:246.0px;width:140.9px;height:36px;background:#fff"></div>
<div class="a" style="left:1414px;top:246.0px;width:139.8px;height:36px;background:#fff"></div>
<div class="a" style="left:1555.9px;top:246.0px;width:139.8px;height:36px;background:#fff"></div>
<div class="a" style="left:1697.8px;top:246.0px;width:65.7px;height:36px;background:#fff"></div>
<div class="cb" style="left:22.8px;top:254.2px"></div>
<div class="t" style="left:56.6px;top:253.0px;font-size:12.7px;color:#52a7e2;letter-spacing:-0.33px;">chr10:43600380..43600662</div>
<div class="t" style="left:229.9px;top:253.0px;font-size:12.7px;color:#2b2b2b;letter-spacing:-0.49px;">282</div>
<div class="ck" style="left:325px;top:257.2px;color:#49a52c">&#10004;</div>
<div class="ck" style="left:347.4px;top:257.4px;color:#d9343d;font-size:15.6px">&#10006;</div>
<div class="ck" style="left:367.8px;top:257.2px;color:#49a52c">&#10004;</div>
<div class="t" style="left:407.5px;top:253.0px;font-size:12.7px;color:#2b2b2b;letter-spacing:-0.46px;">1.47508</div>
<div class="t" style="left:589.5px;top:253.0px;font-size:12.7px;color:#2b2b2b;letter-spacing:0.04px;">deletion</div>
<div class="t" style="left:750.3px;top:253.0px;font-size:12.7px;color:#2b2b2b;letter-spacing:-0.85px;">RET</div>
<div class="dot" style="left:931.2px;top:256.1px;background:#e34a4a"></div>
<div class="dot" style="left:947px;top:256.1px;background:#efefef"></div>
<div class="t" style="left:999.5px;top:253.0px;font-size:12.7px;color:#2b2b2b;letter-spacing:-0.43px;">5.65</div>
<div class="badge" style="left:1177.9px;top:256.0px;width:55.4px;background:#cc0000;letter-spacing:0.02px">Pathogenic</div>
<div class="badge" style="left:1278.7px;top:256.0px;width:42.3px;background:#cc0000;letter-spacing:0.10px">Overlap</div>
<div class="t" style="left:1538.6px;top:253.0px;font-size:12.7px;color:#2b2b2b;">1</div>
<div class="t" style="left:1680.5px;top:253.0px;font-size:12.7px;color:#2b2b2b;">1</div>
<div class="a" style="left:12.2px;top:284.0px;width:34.5px;height:35px;background:#f1f1f1"></div>
<div class="a" style="left:48.8px;top:284.0px;width:169.8px;height:35px;background:#f1f1f1"></div>
<div class="a" style="left:220.7px;top:284.0px;width:82.0px;height:35px;background:#f1f1f1"></div>
<div class="a" style="left:304.8px;top:284.0px;width:92.0px;height:35px;background:#f1f1f1"></div>
<div class="a" style="left:398.9px;top:284.0px;width:180.3px;height:35px;background:#f1f1f1"></div>
<div class="a" style="left:581.3px;top:284.0px;width:158.5px;height:35px;background:#f1f1f1"></div>
<div class="a" style="left:741.9px;top:284.0px;width:177.2px;height:35px;background:#f1f1f1"></div>
<div class="a" style="left:921.2px;top:284.0px;width:67.7px;height:35px;background:#f1f1f1"></div>
<div class="a" style="left:991px;top:284.0px;width:149.1px;height:35px;background:#f1f1f1"></div>
<div class="a" style="left:1142.2px;top:284.0px;width:126.7px;height:35px;background:#f1f1f1"></div>
<div class="a" style="left:1271px;top:284.0px;width:140.9px;height:35px;background:#f1f1f1"></div>
<div class="a" style="left:1414px;top:284.0px;width:139.8px;height:35px;background:#f1f1f1"></div>
<div class="a" style="left:1555.9px;top:284.0px;width:139.8px;height:35px;background:#f1f1f1"></div>
<div class="a" style="left:1697.8px;top:284.0px;width:65.7px;height:35px;background:#f1f1f1"></div>
<div class="cb" style="left:22.8px;top:292.2px"></div>
<div class="t" style="left:56.6px;top:291.0px;font-size:12.7px;color:#52a7e2;letter-spacing:-0.19px;">chrX:133119282..1331194...</div>
<div class="t" style="left:229.9px;top:291.0px;font-size:12.7px;color:#2b2b2b;letter-spacing:-0.49px;">215</div>
<div class="ck" style="left:325px;top:295.2px;color:#49a52c">&#10004;</div>
<div class="ck" style="left:347.4px;top:295.4px;color:#d9343d;font-size:15.6px">&#10006;</div>
<div class="ck" style="left:367.8px;top:295.2px;color:#49a52c">&#10004;</div>
<div class="t" style="left:407.5px;top:291.0px;font-size:12.7px;color:#2b2b2b;letter-spacing:-0.46px;">1.35614</div>
<div class="t" style="left:589.5px;top:291.0px;font-size:12.7px;color:#2b2b2b;letter-spacing:0.04px;">deletion</div>
<div class="t" style="left:750.3px;top:291.0px;font-size:12.7px;color:#2b2b2b;letter-spacing:-0.86px;">GPC3</div>
<div class="t" style="left:999.5px;top:291.0px;font-size:12.7px;color:#2b2b2b;letter-spacing:-0.43px;">7.53</div>
<div class="badge" style="left:1177.9px;top:294.0px;width:55.4px;background:#cc0000;letter-spacing:0.02px">Pathogenic</div>
<div class="badge" style="left:1278.7px;top:294.0px;width:42.3px;background:#cc0000;letter-spacing:0.10px">Overlap</div>
<div class="t" style="left:1538.6px;top:291.0px;font-size:12.7px;color:#2b2b2b;">1</div>
<div class="t" style="left:1680.5px;top:291.0px;font-size:12.7px;color:#2b2b2b;">2</div>
<div class="a" style="left:12.2px;top:321.0px;width:34.5px;height:35px;background:#fff"></div>
<div class="a" style="left:48.8px;top:321.0px;width:169.8px;height:35px;background:#fff"></div>
<div class="a" style="left:220.7px;top:321.0px;width:82.0px;height:35px;background:#fff"></div>
<div class="a" style="left:304.8px;top:321.0px;width:92.0px;height:35px;background:#fff"></div>
<div class="a" style="left:398.9px;top:321.0px;width:180.3px;height:35px;background:#fff"></div>
<div class="a" style="left:581.3px;top:321.0px;width:158.5px;height:35px;background:#fff"></div>
<div class="a" style="left:741.9px;top:321.0px;width:177.2px;height:35px;background:#fff"></div>
<div class="a" style="left:921.2px;top:321.0px;width:67.7px;height:35px;background:#fff"></div>
<div class="a" style="left:991px;top:321.0px;width:149.1px;height:35px;background:#fff"></div>
<div class="a" style="left:1142.2px;top:321.0px;width:126.7px;height:35px;background:#fff"></div>
<div class="a" style="left:1271px;top:321.0px;width:140.9px;height:35px;background:#fff"></div>
<div class="a" style="left:1414px;top:321.0px;width:139.8px;height:35px;background:#fff"></div>
<div class="a" style="left:1555.9px;top:321.0px;width:139.8px;height:35px;background:#fff"></div>
<div class="a" style="left:1697.8px;top:321.0px;width:65.7px;height:35px;background:#fff"></div>
<div class="cb" style="left:22.8px;top:329.2px"></div>
<div class="t" style="left:56.6px;top:328.0px;font-size:12.7px;color:#52a7e2;letter-spacing:-0.33px;">chr1:241682871..241683043</div>
<div class="t" style="left:229.9px;top:328.0px;font-size:12.7px;color:#2b2b2b;letter-spacing:-0.49px;">172</div>
<div class="ck" style="left:325px;top:332.2px;color:#49a52c">&#10004;</div>
<div class="ck" style="left:347.4px;top:332.4px;color:#d9343d;font-size:15.6px">&#10006;</div>
<div class="ck" style="left:367.8px;top:332.2px;color:#49a52c">&#10004;</div>
<div class="t" style="left:407.5px;top:328.0px;font-size:12.7px;color:#2b2b2b;letter-spacing:-0.46px;">1.38515</div>
<div class="t" style="left:589.5px;top:328.0px;font-size:12.7px;color:#2b2b2b;letter-spacing:0.04px;">deletion</div>
<div class="t" style="left:750.3px;top:328.0px;font-size:12.7px;color:#2b2b2b;letter-spacing:-0.85px;">FH</div>
<div class="dot" style="left:931.2px;top:331.1px;background:#12c412"></div>
<div class="dot" style="left:947px;top:331.1px;background:#efefef"></div>
<div class="t" style="left:999.5px;top:328.0px;font-size:12.7px;color:#2b2b2b;letter-spacing:-0.43px;">6.57</div>
<div class="badge" style="left:1177.9px;top:331.0px;width:55.4px;background:#cc0000;letter-spacing:0.02px">Pathogenic</div>
<div class="badge" style="left:1278.7px;top:331.0px;width:42.3px;background:#cc0000;letter-spacing:0.10px">Overlap</div>
<div class="t" style="left:1538.6px;top:328.0px;font-size:12.7px;color:#2b2b2b;">1</div>
<div class="t" style="left:1680.5px;top:328.0px;font-size:12.7px;color:#2b2b2b;">1</div>
<div class="a" style="left:12.2px;top:358.0px;width:34.5px;height:35px;background:#f1f1f1"></div>
<div class="a" style="left:48.8px;top:358.0px;width:169.8px;height:35px;background:#f1f1f1"></div>
<div class="a" style="left:220.7px;top:358.0px;width:82.0px;height:35px;background:#f1f1f1"></div>
<div class="a" style="left:304.8px;top:358.0px;width:92.0px;height:35px;background:#f1f1f1"></div>
<div class="a" style="left:398.9px;top:358.0px;width:180.3px;height:35px;background:#f1f1f1"></div>
<div class="a" style="left:581.3px;top:358.0px;width:158.5px;height:35px;background:#f1f1f1"></div>
<div class="a" style="left:741.9px;top:358.0px;width:177.2px;height:35px;background:#f1f1f1"></div>
<div class="a" style="left:921.2px;top:358.0px;width:67.7px;height:35px;background:#f1f1f1"></div>
<div class="a" style="left:991px;top:358.0px;width:149.1px;height:35px;background:#f1f1f1"></div>
<div class="a" style="left:1142.2px;top:358.0px;width:126.7px;height:35px;background:#f1f1f1"></div>
<div class="a" style="left:1271px;top:358.0px;width:140.9px;height:35px;background:#f1f1f1"></div>
<div class="a" style="left:1414px;top:358.0px;width:139.8px;height:35px;background:#f1f1f1"></div>
<div class="a" style="left:1555.9px;top:358.0px;width:139.8px;height:35px;background:#f1f1f1"></div>
<div class="a" style="left:1697.8px;top:358.0px;width:65.7px;height:35px;background:#f1f1f1"></div>
<div class="cb" style="left:22.8px;top:366.2px"></div>
<div class="t" style="left:56.6px;top:365.0px;font-size:12.7px;color:#52a7e2;letter-spacing:-0.33px;">chr10:43572687..43572800</div>
<div class="t" style="left:229.9px;top:365.0px;font-size:12.7px;color:#2b2b2b;letter-spacing:-0.47px;">113</div>
<div class="ck" style="left:325px;top:369.2px;color:#49a52c">&#10004;</div>
<div class="ck" style="left:347.4px;top:369.4px;color:#d9343d;font-size:15.6px">&#10006;</div>
<div class="ck" style="left:367.8px;top:369.2px;color:#49a52c">&#10004;</div>
<div class="t" style="left:407.5px;top:365.0px;font-size:12.7px;color:#2b2b2b;letter-spacing:-0.46px;">1.07313</div>
<div class="t" style="left:589.5px;top:365.0px;font-size:12.7px;color:#2b2b2b;letter-spacing:0.04px;">deletion</div>
<div class="t" style="left:750.3px;top:365.0px;font-size:12.7px;color:#2b2b2b;letter-spacing:-0.85px;">RET</div>
<div class="dot" style="left:931.2px;top:368.1px;background:#c2c2c2"></div>
<div class="t" style="left:999.5px;top:365.0px;font-size:12.7px;color:#2b2b2b;letter-spacing:-0.43px;">7.55</div>
<div class="badge" style="left:1177.9px;top:368.0px;width:55.4px;background:#cc0000;letter-spacing:0.02px">Pathogenic</div>
<div class="badge" style="left:1278.7px;top:368.0px;width:42.3px;background:#cc0000;letter-spacing:0.10px">Overlap</div>
<div class="t" style="left:1538.6px;top:365.0px;font-size:12.7px;color:#2b2b2b;">1</div>
<div class="t" style="left:1680.5px;top:365.0px;font-size:12.7px;color:#2b2b2b;">2</div>
<div class="a" style="left:12.2px;top:395.0px;width:34.5px;height:35px;background:#fff"></div>
<div class="a" style="left:48.8px;top:395.0px;width:169.8px;height:35px;background:#fff"></div>
<div class="a" style="left:220.7px;top:395.0px;width:82.0px;height:35px;background:#fff"></div>
<div class="a" style="left:304.8px;top:395.0px;width:92.0px;height:35px;background:#fff"></div>
<div class="a" style="left:398.9px;top:395.0px;width:180.3px;height:35px;background:#fff"></div>
<div class="a" style="left:581.3px;top:395.0px;width:158.5px;height:35px;background:#fff"></div>
<div class="a" style="left:741.9px;top:395.0px;width:177.2px;height:35px;background:#fff"></div>
<div class="a" style="left:921.2px;top:395.0px;width:67.7px;height:35px;background:#fff"></div>
<div class="a" style="left:991px;top:395.0px;width:149.1px;height:35px;background:#fff"></div>
<div class="a" style="left:1142.2px;top:395.0px;width:126.7px;height:35px;background:#fff"></div>
<div class="a" style="left:1271px;top:395.0px;width:140.9px;height:35px;background:#fff"></div>
<div class="a" style="left:1414px;top:395.0px;width:139.8px;height:35px;background:#fff"></div>
<div class="a" style="left:1555.9px;top:395.0px;width:139.8px;height:35px;background:#fff"></div>
<div class="a" style="left:1697.8px;top:395.0px;width:65.7px;height:35px;background:#fff"></div>
<div class="cb" style="left:22.8px;top:403.2px"></div>
<div class="t" style="left:56.6px;top:402.0px;font-size:12.7px;color:#52a7e2;letter-spacing:-0.33px;">chr9:100459383..100459595</div>
<div class="t" style="left:229.9px;top:402.0px;font-size:12.7px;color:#2b2b2b;letter-spacing:-0.49px;">212</div>
<div class="ck" style="left:325px;top:406.2px;color:#49a52c">&#10004;</div>
<div class="ck" style="left:347.4px;top:406.4px;color:#d9343d;font-size:15.6px">&#10006;</div>
<div class="ck" style="left:367.8px;top:406.2px;color:#49a52c">&#10004;</div>
<div class="t" style="left:407.5px;top:402.0px;font-size:12.7px;color:#2b2b2b;letter-spacing:-0.46px;">1.22897</div>
<div class="t" style="left:589.5px;top:402.0px;font-size:12.7px;color:#2b2b2b;letter-spacing:0.04px;">deletion</div>
<div class="t" style="left:750.3px;top:402.0px;font-size:12.7px;color:#2b2b2b;letter-spacing:-0.82px;">XPA</div>
<div class="dot" style="left:931.2px;top:405.1px;background:#e60f0f"></div>
<div class="dot" style="left:947px;top:405.1px;background:#efefef"></div>
<div class="t" style="left:999.5px;top:402.0px;font-size:12.7px;color:#2b2b2b;letter-spacing:-0.43px;">7.74</div>
<div class="badge" style="left:1164px;top:405.0px;width:83px;background:#e8602f;letter-spacing:0.02px">Likely Pathogenic</div>
<div class="badge" style="left:1278.7px;top:405.0px;width:42.3px;background:#e8602f;letter-spacing:0.10px">Overlap</div>
<div class="t" style="left:1538.6px;top:402.0px;font-size:12.7px;color:#2b2b2b;">1</div>
<div class="t" style="left:1680.5px;top:402.0px;font-size:12.7px;color:#2b2b2b;">2</div>
<div class="a" style="left:12.2px;top:432.0px;width:34.5px;height:35px;background:#f1f1f1"></div>
<div class="a" style="left:48.8px;top:432.0px;width:169.8px;height:35px;background:#f1f1f1"></div>
<div class="a" style="left:220.7px;top:432.0px;width:82.0px;height:35px;background:#f1f1f1"></div>
<div class="a" style="left:304.8px;top:432.0px;width:92.0px;height:35px;background:#f1f1f1"></div>
<div class="a" style="left:398.9px;top:432.0px;width:180.3px;height:35px;background:#f1f1f1"></div>
<div class="a" style="left:581.3px;top:432.0px;width:158.5px;height:35px;background:#f1f1f1"></div>
<div class="a" style="left:741.9px;top:432.0px;width:177.2px;height:35px;background:#f1f1f1"></div>
<div class="a" style="left:921.2px;top:432.0px;width:67.7px;height:35px;background:#f1f1f1"></div>
<div class="a" style="left:991px;top:432.0px;width:149.1px;height:35px;background:#f1f1f1"></div>
<div class="a" style="left:1142.2px;top:432.0px;width:126.7px;height:35px;background:#f1f1f1"></div>
<div class="a" style="left:1271px;top:432.0px;width:140.9px;height:35px;background:#f1f1f1"></div>
<div class="a" style="left:1414px;top:432.0px;width:139.8px;height:35px;background:#f1f1f1"></div>
<div class="a" style="left:1555.9px;top:432.0px;width:139.8px;height:35px;background:#f1f1f1"></div>
<div class="a" style="left:1697.8px;top:432.0px;width:65.7px;height:35px;background:#f1f1f1"></div>
<div class="cb" style="left:22.8px;top:440.2px"></div>
<div class="t" style="left:56.6px;top:439.0px;font-size:12.7px;color:#52a7e2;letter-spacing:-0.32px;">chr8:90996733..90996810</div>
<div class="t" style="left:229.9px;top:439.0px;font-size:12.7px;color:#2b2b2b;letter-spacing:-0.49px;">77</div>
<div class="ck" style="left:325px;top:443.2px;color:#49a52c">&#10004;</div>
<div class="ck" style="left:347.4px;top:443.4px;color:#d9343d;font-size:15.6px">&#10006;</div>
<div class="ck" style="left:367.8px;top:443.2px;color:#49a52c">&#10004;</div>
<div class="t" style="left:407.5px;top:439.0px;font-size:12.7px;color:#2b2b2b;letter-spacing:-0.46px;">1.44573</div>
<div class="t" style="left:589.5px;top:439.0px;font-size:12.7px;color:#2b2b2b;letter-spacing:0.04px;">deletion</div>
<div class="t" style="left:750.3px;top:439.0px;font-size:12.7px;color:#2b2b2b;letter-spacing:-0.89px;">NBN</div>
<div class="t" style="left:999.5px;top:439.0px;font-size:12.7px;color:#2b2b2b;letter-spacing:-0.43px;">5.01</div>
<div class="badge" style="left:1164px;top:442.0px;width:83px;background:#e8602f;letter-spacing:0.02px">Likely Pathogenic</div>
<div class="badge" style="left:1278.7px;top:442.0px;width:42.3px;background:#e8602f;letter-spacing:0.10px">Overlap</div>
<div class="t" style="left:1538.6px;top:439.0px;font-size:12.7px;color:#2b2b2b;">1</div>
<div class="t" style="left:1680.5px;top:439.0px;font-size:12.7px;color:#2b2b2b;">2</div>
<div class="a" style="left:12.2px;top:469.0px;width:34.5px;height:35px;background:#fff"></div>
<div class="a" style="left:48.8px;top:469.0px;width:169.8px;height:35px;background:#fff"></div>
<div class="a" style="left:220.7px;top:469.0px;width:82.0px;height:35px;background:#fff"></div>
<div class="a" style="left:304.8px;top:469.0px;width:92.0px;height:35px;background:#fff"></div>
<div class="a" style="left:398.9px;top:469.0px;width:180.3px;height:35px;background:#fff"></div>
<div class="a" style="left:581.3px;top:469.0px;width:158.5px;height:35px;background:#fff"></div>
<div class="a" style="left:741.9px;top:469.0px;width:177.2px;height:35px;background:#fff"></div>
<div class="a" style="left:921.2px;top:469.0px;width:67.7px;height:35px;background:#fff"></div>
<div class="a" style="left:991px;top:469.0px;width:149.1px;height:35px;background:#fff"></div>
<div class="a" style="left:1142.2px;top:469.0px;width:126.7px;height:35px;background:#fff"></div>
<div class="a" style="left:1271px;top:469.0px;width:140.9px;height:35px;background:#fff"></div>
<div class="a" style="left:1414px;top:469.0px;width:139.8px;height:35px;background:#fff"></div>
<div class="a" style="left:1555.9px;top:469.0px;width:139.8px;height:35px;background:#fff"></div>
<div class="a" style="left:1697.8px;top:469.0px;width:65.7px;height:35px;background:#fff"></div>
<div class="cb" style="left:22.8px;top:477.2px"></div>
<div class="t" style="left:56.6px;top:476.0px;font-size:12.7px;color:#52a7e2;letter-spacing:-0.29px;">chr11:2905214..2906740</div>
<div class="t" style="left:229.9px;top:476.0px;font-size:12.7px;color:#2b2b2b;letter-spacing:-0.44px;">1 526</div>
<div class="ck" style="left:325px;top:480.2px;color:#49a52c">&#10004;</div>
<div class="ck" style="left:347.4px;top:480.4px;color:#d9343d;font-size:15.6px">&#10006;</div>
<div class="ck" style="left:367.8px;top:480.2px;color:#49a52c">&#10004;</div>
<div class="t" style="left:407.5px;top:476.0px;font-size:12.7px;color:#2b2b2b;letter-spacing:-0.46px;">1.44148</div>
<div class="t" style="left:589.5px;top:476.0px;font-size:12.7px;color:#2b2b2b;letter-spacing:0.04px;">deletion</div>
<div class="t" style="left:750.3px;top:476.0px;font-size:12.7px;color:#2b2b2b;letter-spacing:-0.87px;">CDKN1C</div>
<div class="dot" style="left:931.2px;top:479.1px;background:#12c412"></div>
<div class="dot" style="left:947px;top:479.1px;background:#efefef"></div>
<div class="t" style="left:999.5px;top:476.0px;font-size:12.7px;color:#2b2b2b;letter-spacing:-0.42px;">11.5</div>
<div class="badge" style="left:1154px;top:479.0px;width:103px;background:#fba94c;letter-spacing:0.02px">Uncertain Significance</div>
<div class="badge" style="left:1278.7px;top:479.0px;width:42.3px;background:#cc0000;letter-spacing:0.10px">Overlap</div>
<div class="t" style="left:1538.6px;top:476.0px;font-size:12.7px;color:#2b2b2b;">1</div>
<div class="t" style="left:1680.5px;top:476.0px;font-size:12.7px;color:#2b2b2b;">3</div>
<div class="a" style="left:12.2px;top:506.0px;width:34.5px;height:36px;background:#f1f1f1"></div>
<div class="a" style="left:48.8px;top:506.0px;width:169.8px;height:36px;background:#f1f1f1"></div>
<div class="a" style="left:220.7px;top:506.0px;width:82.0px;height:36px;background:#f1f1f1"></div>
<div class="a" style="left:304.8px;top:506.0px;width:92.0px;height:36px;background:#f1f1f1"></div>
<div class="a" style="left:398.9px;top:506.0px;width:180.3px;height:36px;background:#f1f1f1"></div>
<div class="a" style="left:581.3px;top:506.0px;width:158.5px;height:36px;background:#f1f1f1"></div>
<div class="a" style="left:741.9px;top:506.0px;width:177.2px;height:36px;background:#f1f1f1"></div>
<div class="a" style="left:921.2px;top:506.0px;width:67.7px;height:36px;background:#f1f1f1"></div>
<div class="a" style="left:991px;top:506.0px;width:149.1px;height:36px;background:#f1f1f1"></div>
<div class="a" style="left:1142.2px;top:506.0px;width:126.7px;height:36px;background:#f1f1f1"></div>
<div class="a" style="left:1271px;top:506.0px;width:140.9px;height:36px;background:#f1f1f1"></div>
<div class="a" style="left:1414px;top:506.0px;width:139.8px;height:36px;background:#f1f1f1"></div>
<div class="a" style="left:1555.9px;top:506.0px;width:139.8px;height:36px;background:#f1f1f1"></div>
<div class="a" style="left:1697.8px;top:506.0px;width:65.7px;height:36px;background:#f1f1f1"></div>
<div class="cb" style="left:22.8px;top:514.2px"></div>
<div class="t" style="left:56.6px;top:513.0px;font-size:12.7px;color:#52a7e2;letter-spacing:-0.34px;">chr19:33792224..33793341</div>
<div class="t" style="left:229.9px;top:513.0px;font-size:12.7px;color:#2b2b2b;letter-spacing:-0.43px;">1 117</div>
<div class="ck" style="left:325px;top:517.2px;color:#49a52c">&#10004;</div>
<div class="ck" style="left:347.4px;top:517.4px;color:#d9343d;font-size:15.6px">&#10006;</div>
<div class="ck" style="left:367.8px;top:517.2px;color:#49a52c">&#10004;</div>
<div class="t" style="left:407.5px;top:513.0px;font-size:12.7px;color:#2b2b2b;letter-spacing:-0.46px;">1.42653</div>
<div class="t" style="left:589.5px;top:513.0px;font-size:12.7px;color:#2b2b2b;letter-spacing:0.04px;">deletion</div>
<div class="t" style="left:750.3px;top:513.0px;font-size:12.7px;color:#2b2b2b;letter-spacing:-0.69px;">CEBPA,ENSG00000230259,...</div>
<div class="t" style="left:999.5px;top:513.0px;font-size:12.7px;color:#2b2b2b;letter-spacing:-0.43px;">6.38</div>
<div class="badge" style="left:1154px;top:516.0px;width:103px;background:#fba94c;letter-spacing:0.02px">Uncertain Significance</div>
<div class="badge" style="left:1278.7px;top:516.0px;width:42.3px;background:#e8602f;letter-spacing:0.10px">Overlap</div>
<div class="t" style="left:1538.6px;top:513.0px;font-size:12.7px;color:#2b2b2b;">3</div>
<div class="t" style="left:1680.5px;top:513.0px;font-size:12.7px;color:#2b2b2b;">5</div>
<div class="a" style="left:12.2px;top:544.0px;width:34.5px;height:35px;background:#fff"></div>
<div class="a" style="left:48.8px;top:544.0px;width:169.8px;height:35px;background:#fff"></div>
<div class="a" style="left:220.7px;top:544.0px;width:82.0px;height:35px;background:#fff"></div>
<div class="a" style="left:304.8px;top:544.0px;width:92.0px;height:35px;background:#fff"></div>
<div class="a" style="left:398.9px;top:544.0px;width:180.3px;height:35px;background:#fff"></div>
<div class="a" style="left:581.3px;top:544.0px;width:158.5px;height:35px;background:#fff"></div>
<div class="a" style="left:741.9px;top:544.0px;width:177.2px;height:35px;background:#fff"></div>
<div class="a" style="left:921.2px;top:544.0px;width:67.7px;height:35px;background:#fff"></div>
<div class="a" style="left:991px;top:544.0px;width:149.1px;height:35px;background:#fff"></div>
<div class="a" style="left:1142.2px;top:544.0px;width:126.7px;height:35px;background:#fff"></div>
<div class="a" style="left:1271px;top:544.0px;width:140.9px;height:35px;background:#fff"></div>
<div class="a" style="left:1414px;top:544.0px;width:139.8px;height:35px;background:#fff"></div>
<div class="a" style="left:1555.9px;top:544.0px;width:139.8px;height:35px;background:#fff"></div>
<div class="a" style="left:1697.8px;top:544.0px;width:65.7px;height:35px;background:#fff"></div>
<div class="cb" style="left:22.8px;top:552.2px"></div>
<div class="t" style="left:56.6px;top:551.0px;font-size:12.7px;color:#52a7e2;letter-spacing:-0.33px;">chr3:10183512..10183892</div>
<div class="t" style="left:229.9px;top:551.0px;font-size:12.7px;color:#2b2b2b;letter-spacing:-0.49px;">380</div>
<div class="ck" style="left:325px;top:555.2px;color:#49a52c">&#10004;</div>
<div class="ck" style="left:347.4px;top:555.4px;color:#d9343d;font-size:15.6px">&#10006;</div>
<div class="ck" style="left:367.8px;top:555.2px;color:#49a52c">&#10004;</div>
<div class="t" style="left:407.5px;top:551.0px;font-size:12.7px;color:#2b2b2b;letter-spacing:-0.46px;">1.23634</div>
<div class="t" style="left:589.5px;top:551.0px;font-size:12.7px;color:#2b2b2b;letter-spacing:0.04px;">deletion</div>
<div class="t" style="left:750.3px;top:551.0px;font-size:12.7px;color:#2b2b2b;letter-spacing:-0.82px;">VHL</div>
<div class="dot" style="left:931.2px;top:554.1px;background:#efefef"></div>
<div class="t" style="left:999.5px;top:551.0px;font-size:12.7px;color:#2b2b2b;letter-spacing:-0.43px;">9.65</div>
<div class="badge" style="left:1154px;top:554.0px;width:103px;background:#fba94c;letter-spacing:0.02px">Uncertain Significance</div>
<div class="badge" style="left:1278.7px;top:554.0px;width:42.3px;background:#cc0000;letter-spacing:0.10px">Overlap</div>
<div class="badge" style="left:1322.2px;top:554.0px;width:51px;background:#0e6b1e;letter-spacing:0.24px">Literature</div>
<div class="t" style="left:1538.6px;top:551.0px;font-size:12.7px;color:#2b2b2b;">1</div>
<div class="t" style="left:1680.5px;top:551.0px;font-size:12.7px;color:#2b2b2b;">2</div>
<div class="a" style="left:12.2px;top:581.0px;width:34.5px;height:35px;background:#f1f1f1"></div>
<div class="a" style="left:48.8px;top:581.0px;width:169.8px;height:35px;background:#f1f1f1"></div>
<div class="a" style="left:220.7px;top:581.0px;width:82.0px;height:35px;background:#f1f1f1"></div>
<div class="a" style="left:304.8px;top:581.0px;width:92.0px;height:35px;background:#f1f1f1"></div>
<div class="a" style="left:398.9px;top:581.0px;width:180.3px;height:35px;background:#f1f1f1"></div>
<div class="a" style="left:581.3px;top:581.0px;width:158.5px;height:35px;background:#f1f1f1"></div>
<div class="a" style="left:741.9px;top:581.0px;width:177.2px;height:35px;background:#f1f1f1"></div>
<div class="a" style="left:921.2px;top:581.0px;width:67.7px;height:35px;background:#f1f1f1"></div>
<div class="a" style="left:991px;top:581.0px;width:149.1px;height:35px;background:#f1f1f1"></div>
<div class="a" style="left:1142.2px;top:581.0px;width:126.7px;height:35px;background:#f1f1f1"></div>
<div class="a" style="left:1271px;top:581.0px;width:140.9px;height:35px;background:#f1f1f1"></div>
<div class="a" style="left:1414px;top:581.0px;width:139.8px;height:35px;background:#f1f1f1"></div>
<div class="a" style="left:1555.9px;top:581.0px;width:139.8px;height:35px;background:#f1f1f1"></div>
<div class="a" style="left:1697.8px;top:581.0px;width:65.7px;height:35px;background:#f1f1f1"></div>
<div class="cb" style="left:22.8px;top:589.2px"></div>
<div class="t" style="left:56.6px;top:588.0px;font-size:12.7px;color:#52a7e2;letter-spacing:-0.33px;">chr8:145742778..145743189</div>
<div class="t" style="left:229.9px;top:588.0px;font-size:12.7px;color:#2b2b2b;letter-spacing:-0.47px;">411</div>
<div class="ck" style="left:325px;top:592.2px;color:#49a52c">&#10004;</div>
<div class="ck" style="left:347.4px;top:592.4px;color:#d9343d;font-size:15.6px">&#10006;</div>
<div class="ck" style="left:367.8px;top:592.2px;color:#49a52c">&#10004;</div>
<div class="t" style="left:407.5px;top:588.0px;font-size:12.7px;color:#2b2b2b;letter-spacing:-0.46px;">1.10568</div>
<div class="t" style="left:589.5px;top:588.0px;font-size:12.7px;color:#2b2b2b;letter-spacing:0.04px;">deletion</div>
<div class="t" style="left:750.3px;top:588.0px;font-size:12.7px;color:#2b2b2b;letter-spacing:-0.85px;">RECQL4</div>
<div class="t" style="left:999.5px;top:588.0px;font-size:12.7px;color:#2b2b2b;letter-spacing:-0.43px;">13.9</div>
<div class="badge" style="left:1154px;top:591.0px;width:103px;background:#fba94c;letter-spacing:0.02px">Uncertain Significance</div>
<div class="badge" style="left:1278.7px;top:591.0px;width:42.3px;background:#e8602f;letter-spacing:0.10px">Overlap</div>
<div class="badge" style="left:1322.2px;top:591.0px;width:51px;background:#0e6b1e;letter-spacing:0.24px">Literature</div>
<div class="t" style="left:1538.6px;top:588.0px;font-size:12.7px;color:#2b2b2b;">1</div>
<div class="t" style="left:1680.5px;top:588.0px;font-size:12.7px;color:#2b2b2b;">4</div>
</div>
<div class="a" style="left:1763.3px;top:164.4px;width:15.2px;height:452.3px;background:#fafafa"></div>
<div class="a" style="left:1766.4px;top:181.8px;width:8.4px;height:276.6px;background:#8a8a8a;border-radius:4.2px"></div>
<svg style="left:1766.4px;top:169.8px" width="8.6" height="4.6" viewBox="0 0 8.6 4.6"><path d="M0 4.6L4.3 0L8.6 4.6Z" fill="#8a8a8a"/></svg>
<svg style="left:1766.4px;top:590.8px" width="8.6" height="4.6" viewBox="0 0 8.6 4.6"><path d="M0 0L4.3 4.6L8.6 0Z" fill="#8a8a8a"/></svg>
<div class="a" style="left:12.2px;top:602.7px;width:1751px;height:14px;background:#fafafa"></div>
<div class="a" style="left:30px;top:606px;width:1301px;height:8.5px;background:#8a8a8a;border-radius:4.3px"></div>
<svg style="left:17px;top:605.8px" width="4.8" height="9" viewBox="0 0 4.8 9"><path d="M4.8 0L0 4.5L4.8 9Z" fill="#555"/></svg>
<svg style="left:1751.5px;top:605.8px" width="4.8" height="9" viewBox="0 0 4.8 9"><path d="M0 0L4.8 4.5L0 9Z" fill="#8a8a8a"/></svg>
<div class="t" style="left:11.4px;top:631.6px;font-size:12.7px;color:#444;letter-spacing:-0.26px;">Showing 1 to 16 of 16 rows</div>
<div class="a" style="left:166px;top:624px;width:70.8px;height:30.8px;background:#0e5549"></div>
<div class="t" style="left:179.5px;top:629.8px;font-size:12.7px;color:#fff;letter-spacing:-0.40px;">100</div>
<svg style="left:203.5px;top:638.6px" width="7.6" height="4" viewBox="0 0 8 4"><path d="M0 0H8L4 4Z" fill="#fff"/></svg>
<svg style="left:218px;top:637.6px" width="5.6" height="3.2" viewBox="0 0 8 4"><path d="M0 4H8L4 0Z" fill="#fff"/></svg>
<div class="t" style="left:239.6px;top:631.6px;font-size:12.7px;color:#444;letter-spacing:-0.28px;">rows per page</div>
<div class="a" style="left:5px;top:675.8px;width:1780px;height:2.2px;background:#bcbcbc"></div>
<div class="a" style="left:5px;top:678px;width:1780px;height:2px;background:#f4f6fa"></div>
<svg style="left:890px;top:669.2px" width="9.8" height="15.2" viewBox="0 0 11 17"><path d="M5.5 1.2V15.8M2.2 4.4L5.5 1.1L8.8 4.4M2.2 12.6L5.5 15.9L8.8 12.6" stroke="#fff" stroke-opacity="0.7" stroke-width="2.8" fill="none" stroke-linecap="round" stroke-linejoin="round"/><path d="M5.5 1.2V15.8M2.2 4.4L5.5 1.1L8.8 4.4M2.2 12.6L5.5 15.9L8.8 12.6" stroke="#3c3c3c" stroke-width="1.5" fill="none" stroke-linecap="round" stroke-linejoin="round"/></svg>
<div class="a" style="left:5px;top:687.5px;width:1780px;height:43px;background:#fff;box-shadow:0 0 2px rgba(0,0,0,.22)"></div>
<div class="a" style="left:5px;top:730px;width:1780px;height:37.8px;background:#fff"></div>
<div class="a" style="left:12.9px;top:700.9px;width:13.8px;height:13.8px;border-radius:50%;border:1px solid #a9cdb4;background:#fff"></div>
<div class="a" style="left:15.1px;top:703.1px;width:11.4px;height:11.4px;border-radius:50%;background:#22c55e"></div>
<div class="t" style="left:33.0px;top:698.7px;font-size:12.7px;color:#222;letter-spacing:-0.06px;">Variant</div>
<div class="a" style="left:95.9px;top:700.9px;width:13.8px;height:13.8px;border-radius:50%;border:1px solid #c4c9cf;background:#fff"></div>
<div class="t" style="left:116.4px;top:698.7px;font-size:12.7px;color:#222;letter-spacing:-0.84px;">Gene</div>
<div class="a" style="left:1560px;top:696px;width:40px;height:26px;border-radius:13px;background:#c9d3e2"></div>
<div class="a" style="left:1562px;top:698px;width:22px;height:22px;border-radius:50%;background:#fff;box-shadow:0 0 2px rgba(0,0,0,.15)"></div>
<div class="t" style="left:1608.7px;top:698.6px;font-size:12.7px;color:#222;letter-spacing:-0.04px;">Current Annotation</div>
<svg style="left:1739.9px;top:701.9px" width="14" height="14" viewBox="0 0 14 14"><path d="M13.12 9.20L11.96 11.20L10.25 10.39L8.31 11.51L8.15 13.40L5.85 13.40L5.69 11.51L3.75 10.39L2.04 11.20L0.88 9.20L2.44 8.12L2.44 5.88L0.88 4.80L2.04 2.80L3.75 3.61L5.69 2.49L5.85 0.60L8.15 0.60L8.31 2.49L10.25 3.61L11.96 2.80L13.12 4.80L11.56 5.88L11.56 8.12Z" fill="#2aa18a" stroke="#2aa18a" stroke-width="0.9" stroke-linejoin="round"/><circle cx="7" cy="7" r="2.2" fill="#fff"/></svg>
<svg style="left:1763px;top:702.2px" width="13.4" height="13.4" viewBox="0 0 13.4 13.4"><circle cx="6.7" cy="6.7" r="6.9" fill="#1677ff"/></svg>
<div class="t" style="left:1766.6px;top:699.0px;font-size:10.6px;color:#fff;font-weight:700;">?</div>
<div class="tab" style="left:10.9px;width:68.0px;border-left-color:#f5a93f;background:#c8d3e3;border-top-color:#c8d3e3;border-right-color:#c8d3e3;border-bottom-color:#c8d3e3"><span style="left:5.9px;color:#66758f;letter-spacing:-0.06px;">SV Details</span></div>
<div class="tab" style="left:88.2px;width:69.4px;border-left-color:#8e9db9;background:#fff;border-top-color:#d9dae8;border-right-color:#d9dae8;border-bottom-color:#d9dae8"><span style="left:5.9px;color:#66758f;letter-spacing:-0.06px;">Transcripts</span></div>
<div class="tab" style="left:167px;width:184.8px;border-left-color:#c80a0a;background:#fff;border-top-color:#d9dae8;border-right-color:#d9dae8;border-bottom-color:#d9dae8"><span style="left:6.4px;color:#66758f;letter-spacing:-0.00px;">CNV Classification</span><span style="left:113.6px;color:#cc0000;letter-spacing:-0.01px;font-weight:700;">Pathogenic</span></div>
<div class="tab" style="left:361.1px;width:79.6px;border-left-color:#3b82f6;background:#fff;border-top-color:#d9dae8;border-right-color:#d9dae8;border-bottom-color:#d9dae8"><span style="left:5.4px;color:#66758f;letter-spacing:-0.01px;">Publications</span></div>
<div class="tab" style="left:449.8px;width:84.0px;border-left-color:#c80a0a;background:#fff;border-top-color:#d9dae8;border-right-color:#d9dae8;border-bottom-color:#d9dae8"><span style="left:6.7px;color:#66758f;letter-spacing:-0.08px;">Known CNVs</span></div>
<div class="tab" style="left:543.1px;width:85.4px;border-left-color:#8e9db9;background:#fff;border-top-color:#d9dae8;border-right-color:#d9dae8;border-bottom-color:#d9dae8"><span style="left:5.6px;color:#66758f;letter-spacing:-0.01px;">Sample View</span></div>
<div class="tab" style="left:637.1px;width:61.5px;border-left-color:#8e9db9;background:#fff;border-top-color:#d9dae8;border-right-color:#d9dae8;border-bottom-color:#d9dae8"><span style="left:6.7px;color:#66758f;letter-spacing:-0.04px;">CNV Plot</span></div>
<div class="tab" style="left:708.3px;width:83.4px;border-left-color:#8e9db9;background:#fff;border-top-color:#d9dae8;border-right-color:#d9dae8;border-bottom-color:#d9dae8"><span style="left:5.6px;color:#66758f;letter-spacing:-0.02px;">CNV Browser</span></div>
<div class="a" style="left:5px;top:777.6px;width:1780px;height:20px;background:#fff;box-shadow:0 0 2px rgba(0,0,0,.22)"></div>
<svg style="left:0;top:0" width="1805" height="791" viewBox="0 0 1805 791">
<rect x="701" y="714" width="105.2" height="63.8" fill="none" stroke="#ff0000" stroke-width="4"/>
<path d="M478.3 614.6L676 704" stroke="#ff0000" stroke-width="4.2" fill="none"/>
<path d="M694.3 712.9L666.9 710.4L674.6 693.6Z" fill="#ff0000"/>
</svg>
</body></html>
